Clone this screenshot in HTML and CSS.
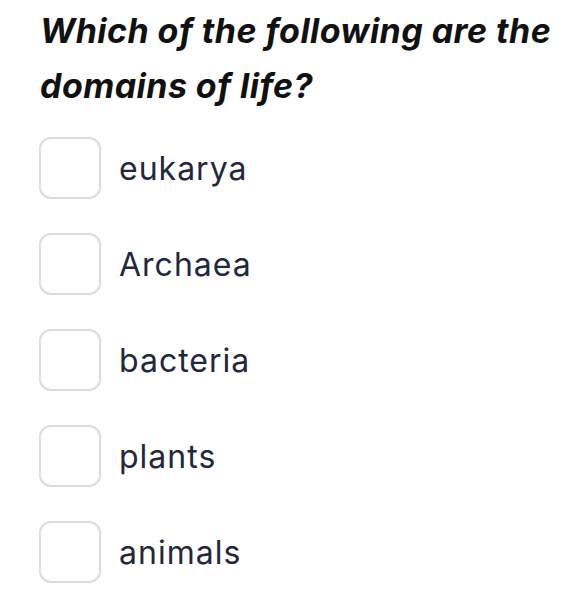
FILE: index.html
```html
<!DOCTYPE html>
<html>
<head>
<meta charset="utf-8">
<link rel="stylesheet" href="styles.css">
</head>
<body>
<div class="question">
  <h1 class="title">Which of the following are the domains of life?</h1>
  <ul class="options">
    <li class="option"><span class="box"></span><span class="label">eukarya</span></li>
    <li class="option"><span class="box"></span><span class="label">Archaea</span></li>
    <li class="option"><span class="box"></span><span class="label">bacteria</span></li>
    <li class="option"><span class="box"></span><span class="label">plants</span></li>
    <li class="option"><span class="box"></span><span class="label">animals</span></li>
  </ul>
</div>
</body>
</html>
```
FILE: styles.css
```css
html, body {
  margin: 0;
  padding: 0;
  background: #ffffff;
}
.question {
  padding: 3px 20px 0 40px;
  font-family: Inter, "Noto Sans", sans-serif;
}
.title {
  margin: 0;
  font-size: 34px;
  font-weight: 700;
  font-style: italic;
  line-height: 55px;
  color: #111111;
  letter-spacing: 0.45px;
}
.options {
  list-style: none;
  margin: 24px 0 0 -1px;
  padding: 0;
  display: flex;
  flex-direction: column;
  gap: 34px;
}
.option {
  display: flex;
  align-items: center;
  gap: 18px;
}
.box {
  width: 58px;
  height: 58px;
  border: 2px solid #dcdcdc;
  border-radius: 12px;
  flex: none;
}
.label {
  font-size: 32px;
  color: #23273e;
  letter-spacing: 1px;
}
```
